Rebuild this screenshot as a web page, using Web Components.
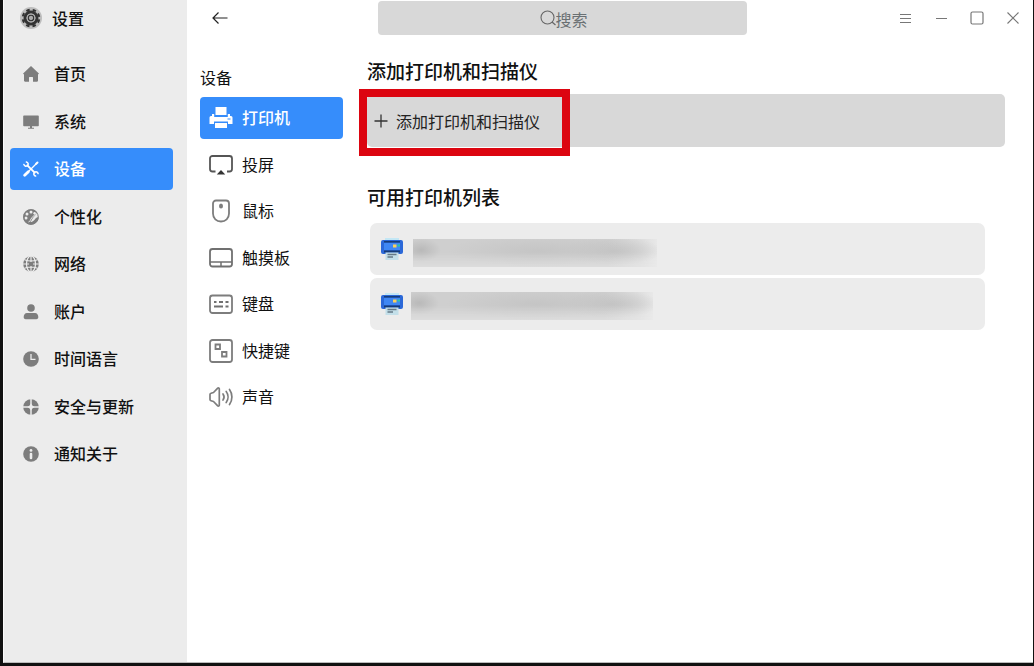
<!DOCTYPE html>
<html lang="zh-CN">
<head>
<meta charset="utf-8">
<title>设置</title>
<style>
html,body{margin:0;height:100%}
body{background:#111;font-family:"Noto Sans CJK SC","Noto Sans",sans-serif;font-size:16px;line-height:24px;color:#111}
</style>
</head>
<body>
<settings-window>
  <side-bar slot="side" heading="设置">
    <nav-item icon="home">首页</nav-item>
    <nav-item icon="system">系统</nav-item>
    <nav-item icon="tools" active>设备</nav-item>
    <nav-item icon="palette">个性化</nav-item>
    <nav-item icon="globe">网络</nav-item>
    <nav-item icon="user">账户</nav-item>
    <nav-item icon="clock">时间语言</nav-item>
    <nav-item icon="shield">安全与更新</nav-item>
    <nav-item icon="info">通知关于</nav-item>
  </side-bar>
  <title-bar slot="header"></title-bar>
  <sub-nav slot="sub" heading="设备">
    <nav-item compact icon="printer" active>打印机</nav-item>
    <nav-item compact icon="cast">投屏</nav-item>
    <nav-item compact icon="mouse">鼠标</nav-item>
    <nav-item compact icon="touchpad">触摸板</nav-item>
    <nav-item compact icon="keyboard">键盘</nav-item>
    <nav-item compact icon="shortcut">快捷键</nav-item>
    <nav-item compact icon="sound">声音</nav-item>
  </sub-nav>
  <printer-panel>
    <add-button slot="add">添加打印机和扫描仪</add-button>
    <printer-row></printer-row>
    <printer-row second></printer-row>
  </printer-panel>
</settings-window>
<script>
const G='#7d7d7d';
const svg=(w,h,body)=>`<svg width="${w}" height="${h}" viewBox="0 0 ${w} ${h}" fill="none" aria-hidden="true">${body}</svg>`;
const icons={
 home:svg(16,16,`<path fill="${G}" d="M8 0 .4 7.2c-.5.5-.3 1 .3 1H1v6.300c0 .8.4 1.200 1.200 1.200H6v-4.200c0-.4.2-.6.6-.6h2.800c.4 0 .6.2.6.6v4.200h3.800c.8 0 1.200-.4 1.200-1.200V8.200h.3c.6 0 .8-.5.3-1Z"/>`),
 system:svg(16,16,`<path fill="${G}" d="M1 1.500h14a.8.8 0 0 1 .8.8v9.200a.8.8 0 0 1-.8.8H9v1.500h2v1H5v-1h2v-1.500H1a.8.8 0 0 1-.8-.8V2.300a.8.8 0 0 1 .8-.8Z"/>`),
 tools:svg(16,16,`<g stroke="#fff" stroke-linecap="round"><path stroke-width="2.800" d="m1.700 14.300 3.600-3.600"/><path stroke-width="1.300" d="m5.500 10.500 8-8"/><path stroke-width="2" d="m13.200 2.800 1.300-1.300"/><path stroke-width="1.900" d="m4.300 4.300 7.400 7.400"/><path stroke-width="1.500" d="M.9 3.400c.4 1.600 2 2.200 3.400 1.400M3.400.9c1.600.4 2.200 2 1.400 3.400M15.100 12.600c-.4-1.600-2-2.200-3.400-1.400M12.600 15.100c-1.600-.4-2.200-2-1.400-3.400"/></g>`),
 palette:svg(16,16,`<path fill="${G}" d="M8 .2a7.800 7.800 0 1 0 7.700 8.800c.1-.8-.7-1-1.500-.8-1.200.4-1.500 1.200-2.600 2.500-1.400 1.700-2.800 2.400-4.500 2.400 1.600-1.100 1.500-2.600 2.800-4.200L14.500 3.600A7.800 7.800 0 0 0 8 .2Z"/><g fill="#ececec"><circle cx="4" cy="5" r="1.500"/><circle cx="8" cy="3" r="1.500"/><circle cx="3" cy="9" r="1.500"/><circle cx="11.600" cy="4.300" r="1.200"/></g><path stroke="#ececec" stroke-width="1" d="M5.500 13c2-.5 1.800-2.500 3.300-4.200l5.500-5.600M10 11l3-3"/><circle cx="8" cy="8" r="7.300" stroke="${G}" stroke-width="1"/>`),
 globe:svg(16,16,`<circle cx="8" cy="8" r="7.800" fill="${G}"/><g stroke="#ececec" stroke-width="1.200"><ellipse cx="8" cy="8" rx="4.500" ry="8"/><path d="M8 0v16M0 8h16M1.500 3.800c4 1.500 9 1.500 13 0M1.500 12.200c4-1.500 9-1.500 13 0"/></g><path fill="${G}" d="M6 6h4v4H6z"/>`),
 user:svg(16,16,`<circle cx="8" cy="4" r="3.800" fill="${G}"/><path fill="${G}" d="M4 9h8c2.100 0 3.300 1.700 3.300 4 0 1.400-.6 2.200-2 2.200H2.700c-1.400 0-2-.8-2-2.200C.7 10.700 1.900 9 4 9Z"/>`),
 clock:svg(16,16,`<circle cx="8" cy="8" r="7.800" fill="${G}"/><path stroke="#ececec" stroke-width="1.300" d="M8 3v5.300h4.500"/>`),
 shield:svg(16,16,`<circle cx="8" cy="8" r="7.800" fill="${G}"/><path stroke="#ececec" stroke-width="1.500" d="M8 0v16M0 8h16"/><path fill="#ececec" d="M8 4.500 9.400 6.600 11.500 8 9.400 9.400 8 11.500 6.600 9.400 4.500 8l2.100-1.400Z"/>`),
 info:svg(16,16,`<circle cx="8" cy="8" r="7.800" fill="${G}"/><circle cx="8" cy="4.400" r="1.400" fill="#ececec"/><path stroke="#ececec" stroke-width="2.600" stroke-linecap="round" d="M8 8v4"/>`),
 printer:svg(24,24,`<path fill="#fff" d="M6.500 1h11v8h-11zM3 8h2.200v3h13.600V8H21v2h1a1.500 1.500 0 0 1 1.500 1.500V18H19v-2.500H5V18H.5v-6.500A1.500 1.500 0 0 1 2 10h1ZM6 17h12v5H6z"/><path stroke="#368dfb" d="M18.500 13h3" stroke-width="1"/>`),
 cast:svg(24,24,`<path stroke="#555" stroke-width="1.800" d="M6.500 18.500H3.500a2.500 2.500 0 0 1-2.500-2.500V5.500a2.500 2.500 0 0 1 2.500-2.500h17a2.500 2.500 0 0 1 2.500 2.500V16a2.500 2.500 0 0 1-2.500 2.500H18"/><path fill="#333" d="m12 17 4.200 4.500H7.800Z"/>`),
 mouse:svg(24,24,`<path stroke="${G}" stroke-width="1.800" d="M7 1.500h10a3 3 0 0 1 3 3v10c0 5-3.500 8-8 8s-8-3-8-8v-10a3 3 0 0 1 3-3Z"/><ellipse cx="12" cy="7" rx="2" ry="2.500" fill="${G}"/>`),
 touchpad:svg(24,24,`<rect x="1" y="3" width="22" height="17.500" rx="2.500" stroke="#707070" stroke-width="1.800"/><path stroke="#707070" stroke-width="1.500" d="M1 16h22M12 16V20.500"/>`),
 keyboard:svg(24,24,`<rect x="1" y="3.500" width="22" height="17.500" rx="2.500" stroke="${G}" stroke-width="1.800"/><path stroke="#707070" stroke-width="1.800" d="M5 10h2.500M10 10h4M16.500 10h3M5 14.500h9M16.500 14.500h3"/>`),
 shortcut:svg(24,24,`<rect x="1" y="1" width="22" height="22" rx="2.500" stroke="${G}" stroke-width="1.800"/><path stroke="${G}" stroke-width="1.800" d="M6.500 5.500h4.500v4.500H6.500zM13 13h4.500v4.500H13z"/>`),
 sound:svg(24,24,`<path stroke="${G}" stroke-width="1.700" stroke-linejoin="round" stroke-linecap="round" d="M1 9.500c0-.7.300-1 1-1.200l2.500-.8L8.500 3.300c.7-.7 1.800-.4 1.800.5v16.400c0 .9-1.100 1.200-1.800.5L4.500 16.500 2 15.700c-.7-.2-1-.5-1-1.200ZM14 9c1.300 1.800 1.300 4.200 0 6M17.200 6.500c2.400 3.200 2.400 7.800 0 11M20.500 4.500c3.200 4.400 3.200 10.600 0 15"/>`),
 gear:svg(22,22,`<circle cx="11" cy="11" r="11" fill="#bdbdbd"/><circle cx="11" cy="11" r="6" stroke="#333" stroke-width="3"/><circle cx="11" cy="11" r="8.300" stroke="#333" stroke-width="2" stroke-dasharray="3.500 3.019" transform="rotate(10 11 11)"/><circle cx="11" cy="11" r="2.800" fill="#aaa" stroke="#333" stroke-width="1.300"/><circle cx="11" cy="11" r="4" stroke="#aaa" stroke-width="1"/>`),
 device:svg(22,22,`<path fill="#c3e7f5" d="M4 0h14v3H4z"/><rect x="0" y="2" width="22" height="14" rx="2" fill="#2b68d8"/><path fill="#3f87f4" d="M3 5h16v7H3z"/><path fill="#173d78" d="M3 3h16v1.500H3zM3 12.500h16v2H3z"/><path fill="#fbd15b" d="M12 6.500h3.500v3H12z"/><path fill="#2ac9a3" d="M16.500 6.500H19v2h-2.500z"/><path fill="#c3dfe9" d="M4.500 14.500h13V22h-13z"/><path stroke="#657987" stroke-width="1.400" d="M6.500 16.500h9M6.500 19h5.500"/>`)
};
const define=(name,markup,setup)=>customElements.define(name,class extends HTMLElement{
  constructor(){
    super();
    const t=document.createElement('template');
    t.innerHTML='<style>*{box-sizing:border-box}svg{display:block;flex:none}:host{display:block;box-sizing:border-box}</style>'+markup;
    this.attachShadow({mode:'open'}).append(t.content.cloneNode(true));
    if(setup)setup(this,this.shadowRoot);
  }
});
define('settings-window',`<style>
:host{min-height:100vh;display:grid;grid-template-columns:184px 1fr;padding:0 1px 3px 3px}
.content{background:#fff;border-bottom:1px solid #bbb;display:flex;flex-direction:column;min-width:0}
.body{display:grid;grid-template-columns:143px 1fr;gap:24px;padding:21px 28px 0 13px}
</style><slot name="side"></slot><div class="content"><slot name="header"></slot><div class="body"><slot name="sub"></slot><slot></slot></div></div>`);
define('side-bar',`<style>
:host{background:#ececec;border-left:1px solid #fafafa;border-bottom:1px solid #bbb;padding:6px 14px 0 6px}
header{display:flex;align-items:center;gap:10px;padding-left:10px;height:24px;font-weight:500}
nav{display:flex;flex-direction:column;justify-content:space-between;height:422px;margin-top:23px}
</style><header>${icons.gear}<span></span></header><nav><slot></slot></nav>`,(h,r)=>r.querySelector('span').textContent=h.getAttribute('heading'));
define('nav-item',`<style>
a{display:flex;align-items:center;height:42px;padding-left:13px;gap:15px;border-radius:4px;color:inherit;text-decoration:none;font-weight:500;white-space:nowrap}
.text{padding-bottom:2px}
:host([compact]) a{padding-left:9px;gap:9px;font-weight:400}
:host([active]) a{background:#368dfb;color:#fff;font-weight:500}
</style><a href="#"><span class="icon"></span><span class="text"><slot></slot></span></a>`,(h,r)=>{
  r.querySelector('.icon').innerHTML=icons[h.getAttribute('icon')];
  if(h.hasAttribute('active'))r.querySelector('a').setAttribute('aria-current','page');
});
define('title-bar',`<style>
:host{display:flex;align-items:center;height:36px;padding:0 2px 0 20px}
button{display:grid;place-items:center;border:0;background:none;padding:0;width:36px;height:36px}
.back{width:26px}
label{flex:1;height:34px;margin:0 140px 0 145px;padding-left:2px;background:#d8d8d8;border-radius:4px;display:flex;align-items:center;justify-content:center}
input{width:32px;height:24px;padding:0;border:0;outline:0;background:none;font:inherit;line-height:24px;color:#333}
input::placeholder{color:#6a7073;opacity:1}
label input{margin-top:2px}
</style><button class="back" aria-label="返回">${svg(16,14,'<path stroke="#222" stroke-width="1.200" d="M15.500 7H1M6.500 1.500 1 7l5.500 5.500"/>')}</button>
<label>${svg(16,16,'<circle cx="7.500" cy="7.500" r="6.500" stroke="#666" stroke-width="1.100"/><path stroke="#666" stroke-width="1.200" d="m12 12 3.500 3"/>')}<input type="text" aria-label="搜索" placeholder="搜索"></label>
<button aria-label="菜单">${svg(14,14,'<path stroke="#777" d="M2 3.500h11M2 7.500h11M2 11.500h11"/>')}</button>
<button aria-label="最小化">${svg(14,14,'<path stroke="#777" d="M2 7.500h11"/>')}</button>
<button aria-label="最大化">${svg(14,14,'<rect x="1" y="1" width="12" height="12" rx="1.500" stroke="#777" stroke-width="1.200"/>')}</button>
<button aria-label="关闭">${svg(14,14,'<path stroke="#777" stroke-width="1.100" d="m1.500 1.500 11 11M12.500 1.500l-11 11"/>')}</button>`);
define('sub-nav',`<style>
:host{padding-top:8px}
h2{margin:0 0 8px;font-size:16px;font-weight:400;line-height:24px}
nav{display:flex;flex-direction:column;justify-content:space-between;height:321px}
</style><h2></h2><nav><slot></slot></nav>`,(h,r)=>r.querySelector('h2').textContent=h.getAttribute('heading'));
define('printer-panel',`<style>
h1,h2{margin:0;font-size:19px;line-height:28px;font-weight:500}
h1{margin-bottom:9px}
h2{margin:36px 0 12px}
.list{display:grid;gap:3px;padding:0 20px 0 3px}
</style><h1>添加打印机和扫描仪</h1><slot name="add"></slot><h2>可用打印机列表</h2><div class="list"><slot></slot></div>`);
define('add-button',`<style>
:host{position:relative}
button{display:flex;align-items:center;gap:8px;width:100%;height:53px;padding:0 0 0 7px;border:0;border-radius:5px;background:#d8d8d8;font:inherit;color:#222;white-space:nowrap}
.mark{position:absolute;left:-8px;top:-5px;width:211px;height:67px;border:8px solid #dc0510;pointer-events:none}
</style><button>${svg(14,14,'<path stroke="#333" stroke-width="1.300" d="M7 .5v13M.5 7h13"/>')}<slot></slot></button><div class="mark"></div>`);
define('printer-row',`<style>
:host{display:flex;align-items:center;gap:10px;height:52px;padding-left:11px;background:#ececec;border-radius:7px}
.name{width:244px;height:28px;margin-top:8px;background:
 radial-gradient(ellipse 20px 12px at 8px 11px,#b9b9b9,transparent),
 radial-gradient(ellipse 90px 16px at 125px 12px,#c5c5c5,transparent),
 radial-gradient(ellipse 50px 14px at 200px 12px,#c4c4c4,transparent),
 linear-gradient(90deg,#cfcfcf 80%,#dedede 94%,#e8e8e8);
 -webkit-mask:linear-gradient(#000 50%,#0008)}
:host([second]) .name{width:242px;margin-top:3px}
:host([second]){gap:8px}
</style>${icons.device}<div class="name" role="img" aria-label="打印机"></div>`);
</script>
</body>
</html>
